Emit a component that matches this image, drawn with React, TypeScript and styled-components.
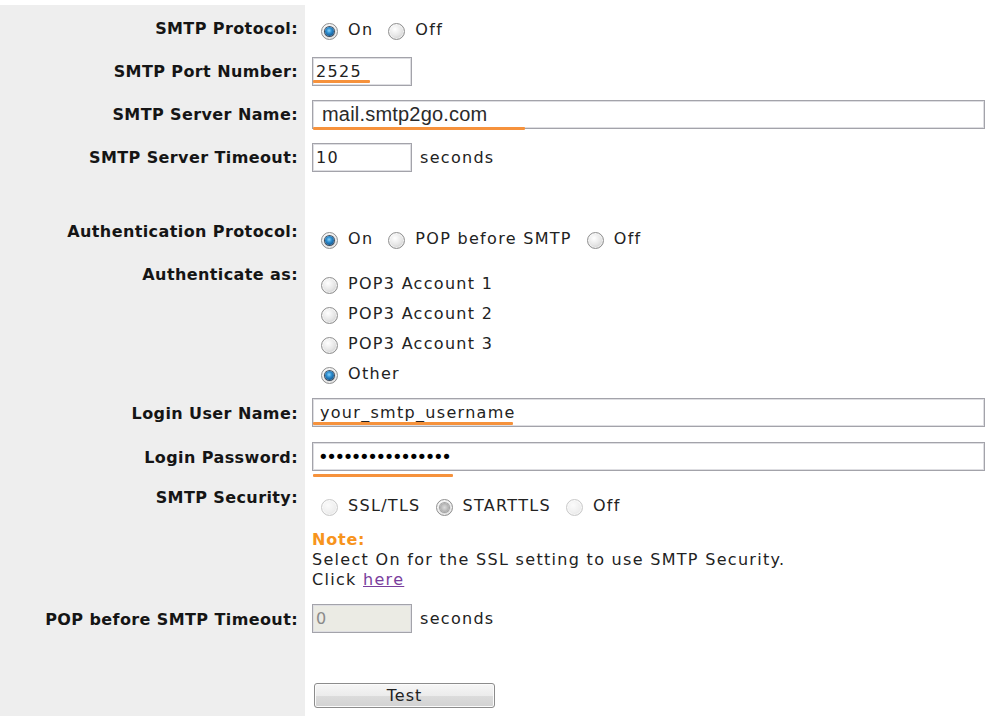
import React from "react";
import styled, { createGlobalStyle, css } from "styled-components";

const GlobalStyle = createGlobalStyle`
  html, body {
    margin: 0;
    padding: 0;
    background: #ffffff;
  }
  body {
    font-family: "DejaVu Sans", Verdana, sans-serif;
    color: #222222;
  }
`;

const Page = styled.div`
  display: flex;
  flex-direction: column;
  min-height: calc(100vh - 5px);
  margin-top: 5px;
`;

const Row = styled.div<{ $grow?: boolean }>`
  display: grid;
  grid-template-columns: 305px 1fr;
  flex: ${(p) => (p.$grow ? 1 : "none")};
`;

const Label = styled.div<{ $top: number }>`
  background: #eeeeee;
  text-align: right;
  padding: ${(p) => p.$top}px 7px 0 0;
  font-family: "DejaVu Sans", Verdana, sans-serif;
  font-weight: bold;
  font-size: 16px;
  letter-spacing: 0.4px;
  line-height: 20px;
  color: #151515;
  white-space: nowrap;
`;

const Value = styled.div<{ $top: number; $bottom?: number }>`
  padding: ${(p) => p.$top}px 0 ${(p) => p.$bottom ?? 8}px 7px;
  font-size: 16px;
  letter-spacing: 1.3px;
  line-height: 20px;
  color: #222222;
`;

const Inline = styled.div`
  display: flex;
  align-items: center;
  gap: 8px;
`;

const Field = styled.div`
  position: relative;
  display: inline-block;
  vertical-align: top;
`;

const TextBox = styled.input<{ $wide?: boolean; $arial?: boolean; $pad?: number }>`
  box-sizing: border-box;
  display: block;
  width: ${(p) => (p.$wide ? 673 : 100)}px;
  height: 29px;
  margin: 0;
  padding: 0 0 0 ${(p) => p.$pad ?? 3}px;
  border: 1px solid #a3a3aa;
  box-shadow: inset 0 0 0 1px #dedee2;
  border-radius: 0;
  background: #ffffff;
  color: #222222;
  outline: none;
  font-family: "DejaVu Sans", Verdana, sans-serif;
  font-size: 16px;
  letter-spacing: 1.3px;
  ${(p) =>
    p.$arial &&
    css`
      font-family: "Liberation Sans", Arial, sans-serif;
      font-size: 20px;
      letter-spacing: 0.2px;
      color: #2a2a2a;
    `}
  &:disabled {
    background: #ebebe4;
    color: #8a8a8a;
  }
`;

const Dots = styled(TextBox)`
  font-size: 18px;
  letter-spacing: -2.4px;
  color: #000000;
`;

/* orange highlight bar drawn over an input */
const Mark = styled.span<{ $top: number; $width: number }>`
  position: absolute;
  left: 1px;
  top: ${(p) => p.$top}px;
  width: ${(p) => p.$width}px;
  height: 3px;
  background: #f6923c;
  border-radius: 1px;
`;

const RadioGroup = styled.div`
  display: flex;
  align-items: center;
  gap: 15px;
  height: 20px;
  padding-left: 9px;
`;

const RadioList = styled.div`
  display: flex;
  flex-direction: column;
  padding-left: 9px;
`;

const Option = styled.label<{ $tall?: boolean }>`
  display: inline-flex;
  align-items: center;
  gap: 10px;
  height: ${(p) => (p.$tall ? 30 : 20)}px;
  white-space: nowrap;
`;

const Radio = styled.span<{ $checked?: boolean; $disabled?: boolean }>`
  position: relative;
  flex: none;
  box-sizing: border-box;
  width: 17px;
  height: 17px;
  margin-top: 2px;
  border-radius: 50%;
  border: 1px solid ${(p) => (p.$disabled && !p.$checked ? "#c9c9c9" : "#8f8f8f")};
  background: ${(p) =>
    p.$disabled && !p.$checked
      ? "radial-gradient(circle at 40% 35%, #fbfbfb 0%, #efefef 55%, #dcdcdc 100%)"
      : "radial-gradient(circle at 40% 35%, #ffffff 0%, #e6e6e6 50%, #bdbdbd 100%)"};
  box-shadow: inset 0 0 0 1px rgba(255, 255, 255, 0.6);
  ${(p) =>
    p.$checked &&
    css`
      &::after {
        content: "";
        position: absolute;
        left: 3px;
        top: 3px;
        width: 9px;
        height: 9px;
        border-radius: 50%;
        background: ${p.$disabled
          ? "radial-gradient(circle at 50% 50%, #dadada 0%, #c0c0c0 45%, #8e8e8e 100%)"
          : "radial-gradient(circle at 45% 40%, #86d4ff 0%, #2f8fd0 35%, #0c4f8a 80%, #0a3a66 100%)"};
        box-shadow: 0 0 0 1px ${p.$disabled ? "#a5a5a5" : "#3f4f60"};
      }
    `}
`;

const Note = styled.div`
  margin-top: 14px;
  line-height: 20px;
`;

const NoteTitle = styled.div`
  color: #f7941d;
  font-weight: bold;
  letter-spacing: 0.8px;
`;

const Link = styled.a`
  color: #7a3e9d;
  text-decoration: underline;
`;

const Button = styled.button`
  box-sizing: border-box;
  display: block;
  width: 181px;
  height: 25px;
  margin: 0 0 0 2px;
  padding: 0;
  border: 1px solid #8c8c8c;
  border-radius: 3px;
  background: linear-gradient(#f6f6f6 0%, #ececec 50%, #dcdcdc 51%, #d2d2d2 100%);
  box-shadow: inset 0 0 0 1px #fbfbfb;
  font-family: "DejaVu Sans", Verdana, sans-serif;
  font-size: 16px;
  letter-spacing: 1px;
  color: #222222;
`;

type Opt = { text: string; checked?: boolean; disabled?: boolean };

const Radios = ({ items }: { items: Opt[] }) => (
  <RadioGroup>
    {items.map((o) => (
      <Option key={o.text}>
        <Radio $checked={o.checked} $disabled={o.disabled} />
        {o.text}
      </Option>
    ))}
  </RadioGroup>
);

export default function App() {
  return (
    <>
      <GlobalStyle />
      <Page>
        <Row>
          <Label $top={14}>SMTP Protocol:</Label>
          <Value $top={15} $bottom={11}>
            <Radios items={[{ text: "On", checked: true }, { text: "Off" }]} />
          </Value>
        </Row>

        <Row>
          <Label $top={11}>SMTP Port Number:</Label>
          <Value $top={6}>
            <Field>
              <TextBox readOnly value="2525" />
              <Mark $top={23} $width={57} />
            </Field>
          </Value>
        </Row>

        <Row>
          <Label $top={11}>SMTP Server Name:</Label>
          <Value $top={6}>
            <Field>
              <TextBox $wide $arial $pad={9} readOnly value="mail.smtp2go.com" />
              <Mark $top={27} $width={212} />
            </Field>
          </Value>
        </Row>

        <Row>
          <Label $top={11}>SMTP Server Timeout:</Label>
          <Value $top={6}>
            <Inline>
              <TextBox readOnly value="10" />
              <span>seconds</span>
            </Inline>
          </Value>
        </Row>

        <Row>
          <Label $top={42}>Authentication Protocol:</Label>
          <Value $top={49} $bottom={9}>
            <Radios
              items={[
                { text: "On", checked: true },
                { text: "POP before SMTP" },
                { text: "Off" },
              ]}
            />
          </Value>
        </Row>

        <Row>
          <Label $top={7}>Authenticate as:</Label>
          <Value $top={11} $bottom={3}>
            <RadioList>
              {["POP3 Account 1", "POP3 Account 2", "POP3 Account 3", "Other"].map((t) => (
                <Option $tall key={t}>
                  <Radio $checked={t === "Other"} />
                  {t}
                </Option>
              ))}
            </RadioList>
          </Value>
        </Row>

        <Row>
          <Label $top={12}>Login User Name:</Label>
          <Value $top={6}>
            <Field>
              <TextBox $wide $pad={7} readOnly value="your_smtp_username" />
              <Mark $top={24} $width={200} />
            </Field>
          </Value>
        </Row>

        <Row>
          <Label $top={13}>Login Password:</Label>
          <Value $top={7}>
            <Field>
              <Dots $wide $pad={5} readOnly value={"\u2022".repeat(16)} />
              <Mark $top={32} $width={140} />
            </Field>
          </Value>
        </Row>

        <Row>
          <Label $top={9}>SMTP Security:</Label>
          <Value $top={17}>
            <Radios
              items={[
                { text: "SSL/TLS", disabled: true },
                { text: "STARTTLS", checked: true, disabled: true },
                { text: "Off", disabled: true },
              ]}
            />
            <Note>
              <NoteTitle>Note:</NoteTitle>
              <div>Select On for the SSL setting to use SMTP Security.</div>
              <div>
                Click <Link href="#">here</Link>
              </div>
            </Note>
          </Value>
        </Row>

        <Row>
          <Label $top={12}>POP before SMTP Timeout:</Label>
          <Value $top={6}>
            <Inline>
              <TextBox disabled value="0" />
              <span>seconds</span>
            </Inline>
          </Value>
        </Row>

        <Row $grow>
          <Label $top={0} />
          <Value $top={42}>
            <Button type="button">Test</Button>
          </Value>
        </Row>
      </Page>
    </>
  );
}
